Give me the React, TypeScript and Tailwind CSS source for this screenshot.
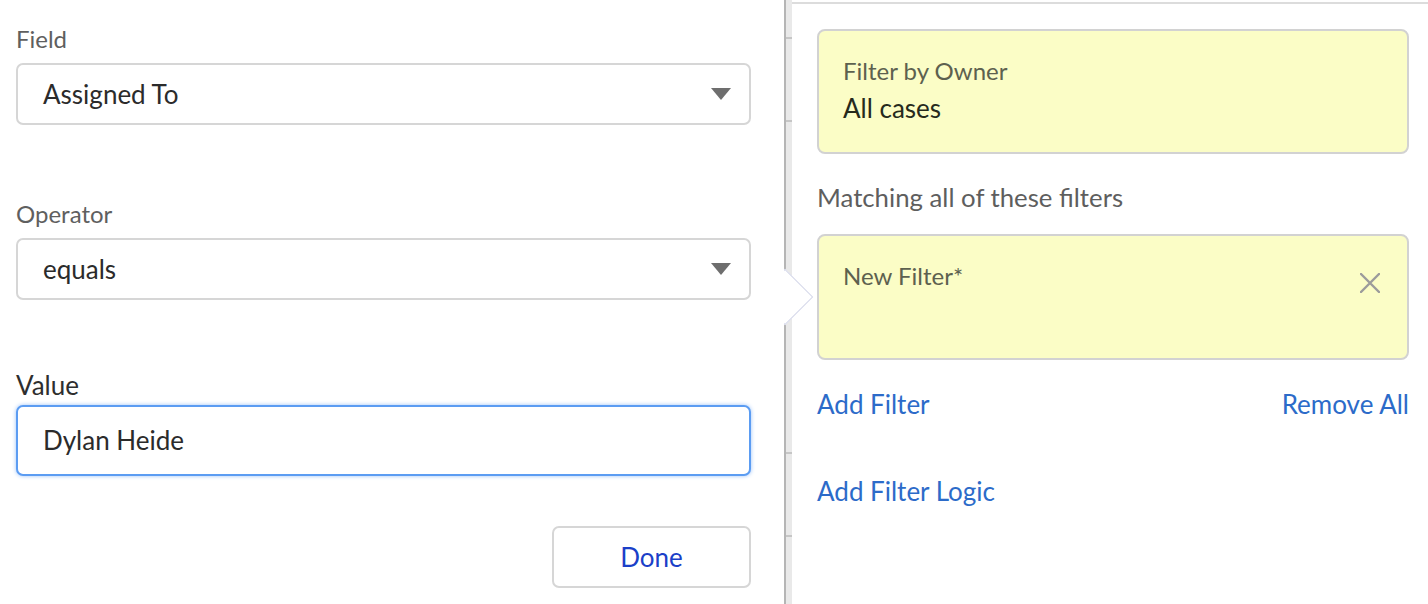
import React from "react";

function Caret() {
  return (
    <svg width="20" height="12" viewBox="0 0 20 12" className="shrink-0">
      <path d="M0 0 H20 L10 12 Z" fill="#6e6e6e" />
    </svg>
  );
}

function Select({ value }: { value: string }) {
  return (
    <div className="h-[62px] w-[735px] rounded-[7px] border-2 border-[#d6d6d6] bg-white flex items-center justify-between pl-[25px] pr-[18px]">
      <span className="text-[26px] text-[#2b2b2b]">{value}</span>
      <Caret />
    </div>
  );
}

export default function App() {
  return (
    <div
      className="relative w-[1428px] h-[604px] overflow-hidden bg-white flex"
      style={{ fontFamily: "Lato, 'Open Sans', sans-serif" }}
    >
      {/* Left popover panel */}
      <div className="w-[784px] h-full bg-white pl-[16px] pt-[25px] flex flex-col">
        <div className="text-[24px] leading-[28px] text-[#5f5f5f]">Field</div>
        <div className="mt-[10px]">
          <Select value="Assigned To" />
        </div>
        <div className="mt-[75px] text-[24px] leading-[28px] text-[#5f5f5f]">Operator</div>
        <div className="mt-[10px]">
          <Select value="equals" />
        </div>
        <div className="mt-[71px] text-[26px] leading-[28px] text-[#2e2e2e]">Value</div>
        <div className="mt-[6px] h-[71px] w-[735px] rounded-[7px] border-2 border-[#5b9cf2] shadow-[0_0_4px_#9cc3f8] bg-white flex items-center pl-[25px]">
          <span className="text-[26px] text-[#2b2b2b]">Dylan Heide</span>
        </div>
        <div className="mt-[50px] w-[735px] flex justify-end">
          <button className="h-[62px] w-[199px] rounded-[7px] border-2 border-[#d6d6d6] bg-white text-[26px] text-[#1b3fc8]">
            Done
          </button>
        </div>
      </div>

      {/* Divider strip */}
      <div className="w-[8px] h-full border-l-2 border-[#b5b5b5] bg-[#e9e9e9] flex flex-col">
        <div className="h-[39px] border-b-2 border-[#c6c6c6]" />
        <div className="h-[83px] border-b-2 border-[#c6c6c6]" />
        <div className="h-[332px] border-b-2 border-[#c6c6c6]" />
        <div className="h-[83px] border-b-2 border-[#c6c6c6]" />
        <div className="flex-1" />
      </div>

      {/* Right panel */}
      <div className="flex-1 h-full bg-white pt-[2px]">
        <div className="h-full border-t-2 border-[#dcdcdc] pl-[25px] pr-[19px] flex flex-col">
          <div className="mt-[25px] h-[125px] rounded-[8px] border-2 border-[#d2d2d2] bg-[#fbfdc6] pl-[24px] pt-[26px]">
            <div className="text-[24px] leading-[28px] text-[#5d614f]">Filter by Owner</div>
            <div className="mt-[9px] text-[26px] leading-[28px] text-[#262a1c]">All cases</div>
          </div>
          <div className="mt-[29px] text-[25.75px] leading-[28px] text-[#5e5e5e]">Matching all of these filters</div>
          <div className="mt-[23px] h-[126px] rounded-[8px] border-2 border-[#d2d2d2] bg-[#fbfdc6] pl-[24px] pr-[27px] pt-[26px] flex justify-between items-start">
            <div className="text-[24px] leading-[28px] text-[#5d614f]">New Filter*</div>
            <svg width="20" height="20" viewBox="0 0 20 20" className="mt-[11px]">
              <path d="M1 1 L19 19 M19 1 L1 19" stroke="#9b9b9b" strokeWidth="2.4" strokeLinecap="round" />
            </svg>
          </div>
          <div className="mt-[28px] flex justify-between text-[26px] leading-[32px] text-[#2c6bc9]">
            <span>Add Filter</span>
            <span>Remove All</span>
          </div>
          <div className="mt-[55px] text-[26px] leading-[32px] text-[#2c6bc9]">Add Filter Logic</div>
        </div>
      </div>

      {/* Pointer arrow */}
      <div className="absolute left-[784px] top-[268px] w-[32px] h-[58px] overflow-hidden">
        <div className="absolute left-[-19px] top-[9px] w-[40px] h-[40px] rotate-45 bg-white border-[1.5px] border-[#d6d9ea]" />
      </div>
    </div>
  );
}
